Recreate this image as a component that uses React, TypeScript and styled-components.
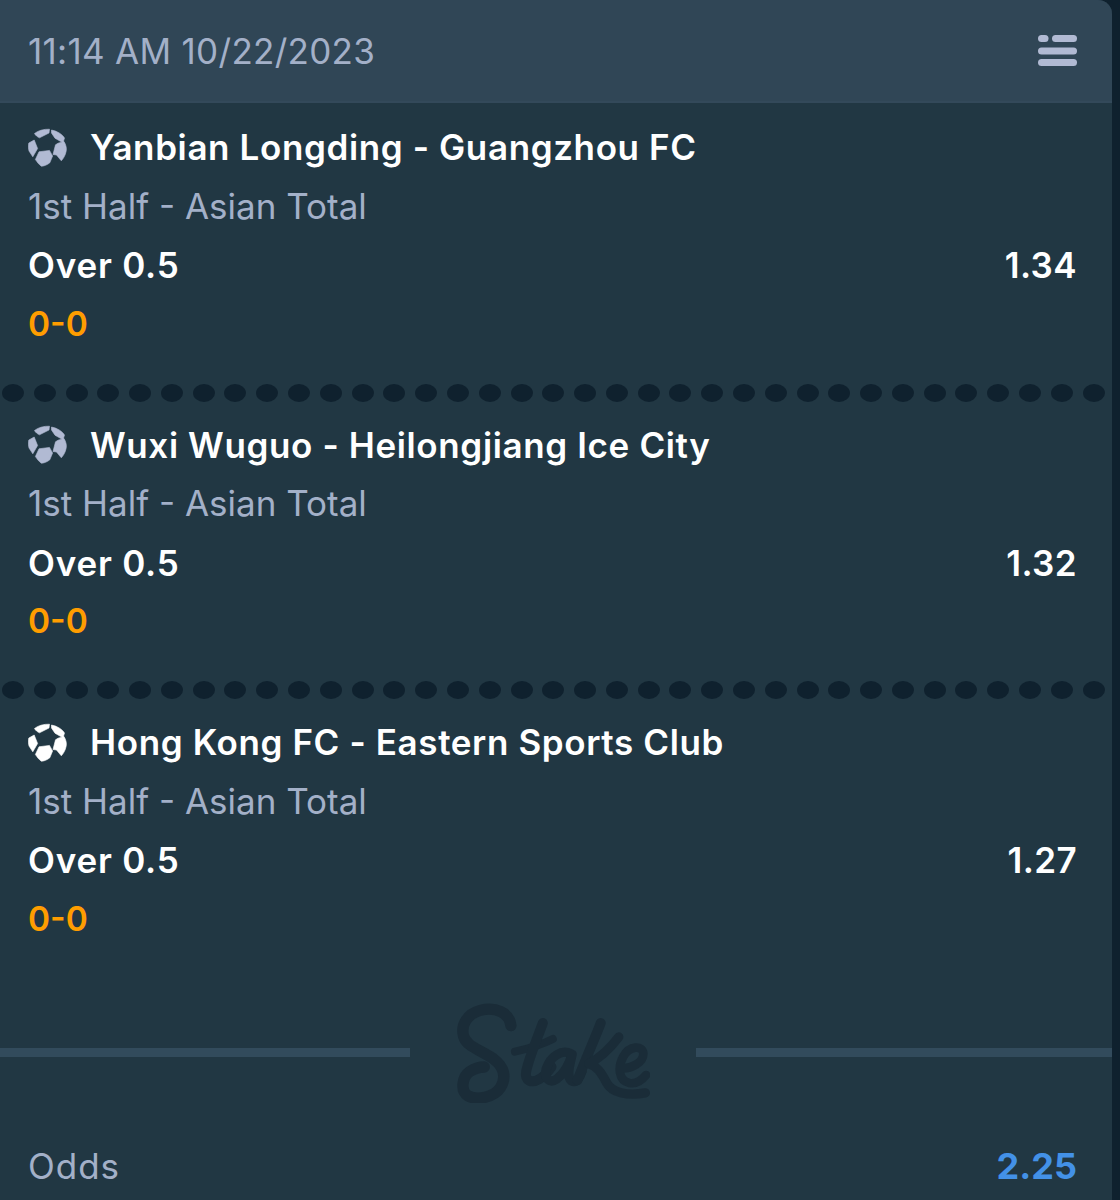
import styled, { createGlobalStyle } from 'styled-components';

const legs = [
  { teams: 'Yanbian Longding - Guangzhou FC', odds: '1.34', iconColor: '#b1bad3' },
  { teams: 'Wuxi Wuguo - Heilongjiang Ice City', odds: '1.32', iconColor: '#b1bad3' },
  { teams: 'Hong Kong FC - Eastern Sports Club', odds: '1.27', iconColor: '#ffffff' },
];

export default function App() {
  return (
    <>
      <GlobalStyle />
      <Panel>
        <Header>
          <Timestamp>11:14 AM 10/22/2023</Timestamp>
          <MenuIcon />
        </Header>
        <Legs>
          {legs.map((leg, index) => (
            <div key={leg.teams}>
              <Leg>
                <TeamsRow>
                  <SoccerIcon color={leg.iconColor} />
                  <Teams>{leg.teams}</Teams>
                </TeamsRow>
                <Market>1st Half - Asian Total</Market>
                <OutcomeRow>
                  <Outcome>Over 0.5</Outcome>
                  <Odds>{leg.odds}</Odds>
                </OutcomeRow>
                <Score>0-0</Score>
              </Leg>
              {index < legs.length - 1 && (
                <Perforation>
                  {Array(35)
                    .fill(0)
                    .map((_, i) => (
                      <Dot key={i} />
                    ))}
                </Perforation>
              )}
            </div>
          ))}
        </Legs>
        <LogoDivider>
          <LeftRule />
          <StakeLogo />
          <RightRule />
        </LogoDivider>
        <Footer>
          <FooterLabel>Odds</FooterLabel>
          <TotalOdds>2.25</TotalOdds>
        </Footer>
      </Panel>
    </>
  );
}

function MenuIcon() {
  return (
    <svg width="40" height="32" viewBox="0 0 40 32" fill="#b1bad3">
      <rect x="0" y="0" width="10.5" height="7" rx="3.5" />
      <rect x="14" y="0" width="25" height="7" rx="3.5" />
      <rect x="0" y="12.5" width="39" height="7" rx="3.5" />
      <rect x="0" y="24" width="39" height="7" rx="3.5" />
    </svg>
  );
}

function SoccerIcon({ color }: { color: string }) {
  return (
    <svg width="39" height="39" viewBox="0 0 39 39" fill={color} stroke={color} strokeWidth="0.6" strokeLinejoin="round">
      <path d="M6.5 5.5C10 2.5 16 1 21.5 1.2L21 5L11.5 9.8C9.5 9 7.5 7.5 6.5 5.5Z" />
      <path d="M23.5 2C29 3 34 6 36.5 10L35 14.8L27 10.2L23.5 5Z" />
      <path d="M.8 15L6.2 12L9.6 20.5L4.8 28.8L1 23C.3 20.5 .2 17.5 .8 15Z" />
      <path d="M30 15.2L36 13.5C38 17 38.8 20 38.2 23C37.5 27 35.5 30.5 33.3 32.8L28.5 27L25 26.5L27.5 16.8Z" />
      <path d="M11 23.8L21.5 22.4L24.6 28L21.8 34.8C19 37 16 38.2 13.3 38.2C11 36.5 9 34 7.4 31.5Z" />
    </svg>
  );
}

// coordinates traced from the logo at 3x
function StakeLogo() {
  return (
    <LogoSvg
      width="193"
      height="100"
      viewBox="230 40 580 300"
      fill="none"
      stroke="#1a2c38"
      strokeLinecap="round"
      strokeLinejoin="round"
    >
      <path
        strokeWidth="34"
        d="M392 108C388 68 345 50 300 62C262 72 240 105 250 140C258 170 300 180 340 208C372 232 380 262 360 295C342 322 290 335 262 318C240 304 245 262 268 246C280 238 296 232 312 232"
      />
      <path strokeWidth="24" d="M404 186C440 178 485 165 518 148" />
      <path strokeWidth="30" d="M488 100C470 150 446 205 438 245C432 275 455 282 478 268C495 258 505 245 514 232" />
      <path strokeWidth="28" d="M572 192C545 178 510 200 498 238C490 268 510 282 530 268C552 252 568 220 576 194C570 225 556 258 574 274C590 282 600 262 606 245" />
      <path strokeWidth="30" d="M662 100C645 145 618 205 592 272" />
      <path strokeWidth="28" d="M716 142C695 170 660 205 626 222C650 228 664 250 680 280C695 308 740 320 796 310" />
      <path strokeWidth="26" d="M722 236C755 238 790 218 790 192C788 165 748 168 730 200C712 232 715 272 748 280C768 284 785 272 798 256" />
    </LogoSvg>
  );
}

const GlobalStyle = createGlobalStyle`
  html, body {
    margin: 0;
    background: #0f212e;
  }
  body {
    font-family: 'Inter', 'Liberation Sans', sans-serif;
  }
`;

const Panel = styled.div`
  width: 1112px;
  height: 1200px;
  background: #213743;
  border-radius: 0 14px 0 0;
  overflow: hidden;
`;

const Header = styled.div`
  display: flex;
  align-items: center;
  justify-content: space-between;
  height: 103px;
  padding: 0 34px 0 28px;
  box-sizing: border-box;
  background: #304656;
  border-bottom: 2px solid #33495a;
`;

const Timestamp = styled.div`
  font-size: 35px;
  color: #a3b0c8;
  letter-spacing: 0.3px;
`;

const Legs = styled.div`
  padding-top: 7px;
`;

const Leg = styled.div`
  padding: 7.5px 35px 0 28px;
  height: 267.5px;
  box-sizing: border-box;
`;

const TeamsRow = styled.div`
  display: flex;
  align-items: center;
  gap: 23px;
  height: 59px;
`;

const Teams = styled.div`
  font-size: 35px;
  font-weight: 600;
  letter-spacing: 0.62px;
  color: #ffffff;
`;

const Market = styled.div`
  font-size: 35px;
  line-height: 59px;
  color: #a3b0c8;
`;

const OutcomeRow = styled.div`
  display: flex;
  justify-content: space-between;
  height: 59px;
  align-items: center;
`;

const Outcome = styled.div`
  font-size: 35px;
  font-weight: 600;
  letter-spacing: 0.8px;
  color: #ffffff;
`;

const Odds = styled.div`
  font-size: 35px;
  font-weight: 600;
  letter-spacing: 0.4px;
  color: #ffffff;
`;

const Score = styled.div`
  font-size: 33.5px;
  font-weight: 600;
  line-height: 59px;
  color: #ff9d00;
`;

const Perforation = styled.div`
  display: flex;
  justify-content: space-between;
  align-items: center;
  height: 30px;
  padding: 0 7px 0 2px;
`;

const Dot = styled.span`
  width: 22px;
  height: 18px;
  border-radius: 50%;
  background: #0f212e;
`;

const LogoDivider = styled.div`
  display: flex;
  align-items: center;
  margin-top: 29px;
  height: 102px;
`;

const LeftRule = styled.div`
  width: 410px;
  height: 9px;
  background: #324b5c;
`;

const RightRule = styled(LeftRule)`
  width: auto;
  flex: 1;
`;

const LogoSvg = styled.svg`
  flex: none;
  margin: 0 46px 0 47px;
`;

const Footer = styled.div`
  display: flex;
  justify-content: space-between;
  align-items: center;
  padding: 0 35px 0 28px;
  margin-top: 40px;
`;

const FooterLabel = styled.div`
  font-size: 35px;
  letter-spacing: 1px;
  color: #a3b0c8;
`;

const TotalOdds = styled.div`
  font-size: 36px;
  font-weight: 700;
  color: #4391e7;
`;
